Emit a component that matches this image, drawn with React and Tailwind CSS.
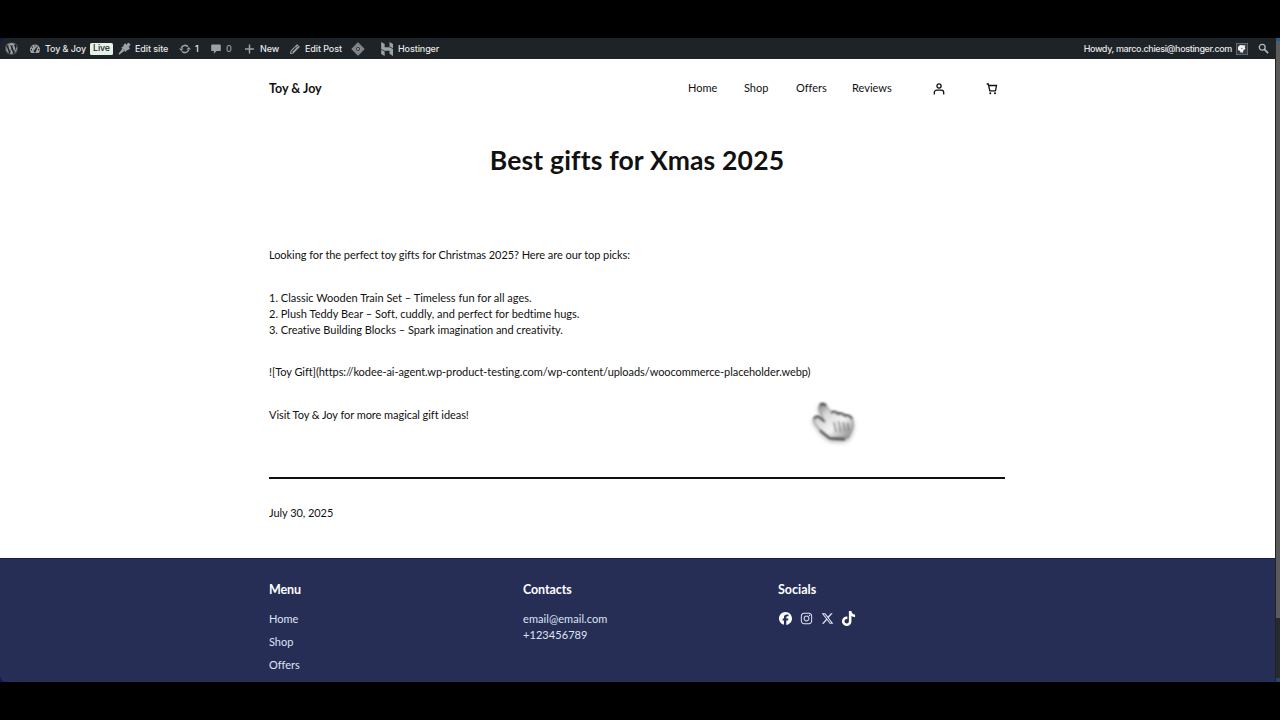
import React from 'react';
import { FaWordpress, FaFacebook, FaInstagram, FaTiktok, FaXTwitter } from 'react-icons/fa6';

const GaugeIcon = () => (
  <svg viewBox="0 0 20 20" className="w-3 h-3 shrink-0" fill="currentColor">
    <path fillRule="evenodd" d="M10 2.5A8.5 8.5 0 0 0 1.5 11c0 2.2.8 4.2 2.2 5.7h12.6A8.4 8.4 0 0 0 18.5 11 8.5 8.5 0 0 0 10 2.5ZM9 4h2v2H9V4ZM4.500 6h2v2h-2V6Zm9 0h1.3l-3 7.500a2 2 0 1 1-3.300-1.500L13.500 6ZM3 10h2v2H3v-2Zm12 0h2v2h-2v-2Z" />
  </svg>
);

const CustomizerIcon = () => (
  <svg viewBox="0 0 20 20" className="w-[13px] h-[13px] shrink-0" fill="currentColor">
    <path d="M11 2 8.500 4.500 8 7 5 8.500 12 15.500 13.500 12.500 16 12 18.500 9.500Z" />
    <path d="M12.500 4.500 16 .8 19.500 4.300 15.800 8Z" />
    <path d="M6.300 9.800 10.200 13.700 8.500 14.500 2 19.500.700 18.200 5.500 11.800Z" />
  </svg>
);

const UpdateIcon = () => (
  <svg viewBox="0 0 20 20" className="w-3 h-3 shrink-0" fill="none" stroke="currentColor" strokeWidth="2.6">
    <path d="M4 8.500A6.200 6.200 0 0 1 15 6.500M16 11.500A6.200 6.200 0 0 1 5 13.500" />
    <path d="M0 9.300h7.600L3.800 13.500ZM12.400 10.700h7.600L16.200 6.500Z" fill="currentColor" stroke="none" />
  </svg>
);

const CommentIcon = () => (
  <svg viewBox="0 0 20 20" className="w-3 h-3 shrink-0" fill="currentColor">
    <path d="M3.500 2.500h13c1 0 1.500.5 1.500 1.500v8c0 1-.5 1.500-1.500 1.500H11L6.500 18v-4.500h-3C2.500 13.500 2 13 2 12V4c0-1 .5-1.500 1.500-1.500Z" />
  </svg>
);

const PlusIcon = () => (
  <svg viewBox="0 0 12 12" className="w-3 h-3 shrink-0" stroke="currentColor" strokeWidth="1.500">
    <path d="M5.500 1.500v9M1 6h9" />
  </svg>
);

const PencilIcon = () => (
  <svg viewBox="0 0 20 20" className="w-3 h-3 shrink-0" fill="none" stroke="currentColor" strokeWidth="1.7" strokeLinejoin="round">
    <path d="M13.500 3 17 6.500 7 16.500 2.500 17.500 3.500 13ZM11.500 5 15 8.500M14.700 7 6 15.700" />
  </svg>
);

const DiamondIcon = () => (
  <svg viewBox="0 0 14 14" className="w-[14px] h-[14px] shrink-0">
    <path d="M7 .3 13.700 7 7 13.700.3 7Z" fill="#8a8d8f" />
    <path d="M7 2.300 11.700 7 7 11.700 2.300 7Z" fill="none" stroke="#686d70" strokeWidth=".7" />
    <circle cx="7" cy="7" r="1.700" fill="none" stroke="#3a4045" strokeWidth="1" />
  </svg>
);

const HostingerIcon = () => (
  <svg viewBox="0 0 24 24" className="w-[14px] h-[14px] shrink-0" fill="currentColor">
    <path d="M2 .2 8 3.400v5.400l8.300.1 6 3.200H2V.2ZM16.300 7.500V.2l6 3.200v7.400l-6-3.300ZM16.300 20.300v-5.200L8 15l-6-3.100h20.300v12l-6-3.600ZM2 13.200l6 3.100v7.500l-6-3.300v-7.300Z" />
  </svg>
);

const SearchIcon = () => (
  <svg viewBox="0 0 12 12" className="w-[11px] h-[11px] shrink-0" fill="none" stroke="currentColor">
    <circle cx="4.600" cy="4.600" r="3.200" strokeWidth="1.400" />
    <path d="m7 7 4 4" strokeWidth="1.800" />
  </svg>
);

const Avatar = () => (
  <svg viewBox="0 0 12 12" className="w-3 h-3 shrink-0">
    <path d="M0 0h12v12H0Z" fill="#343a3e" stroke="#8c8f94" />
    <path d="M2 4 4 2l5.500.5-.7 2 .7 1.500-2 1L7 9.500H4.500L4 8 2 7Z" fill="#f0f0f0" />
    <path d="M5 5.500h1.500" stroke="#888" />
  </svg>
);

const UserIcon = () => (
  <svg viewBox="0 0 12 12" className="w-3 h-3" fill="none" stroke="#111" strokeWidth="1.300">
    <circle cx="6" cy="3" r="2.100" />
    <path d="M1.300 11.500V9.600a2.400 2.400 0 0 1 2.400-2.400h4.600a2.400 2.400 0 0 1 2.400 2.400v1.900" />
  </svg>
);

const CartIcon = () => (
  <svg viewBox="0 0 12 12" className="w-3 h-3" fill="none" stroke="#111" strokeWidth="1.300">
    <path d="M.7 1h1.600l1.500 6.900h5.700l1-5.400H2.700" />
    <circle cx="4.300" cy="10.300" r="1" fill="#111" stroke="none" />
    <circle cx="9" cy="10.300" r="1" fill="#111" stroke="none" />
  </svg>
);

const HandCursor = () => (
  <svg viewBox="0 0 46 44" className="absolute left-[810px] top-[400px] w-[46px] h-[44px] drop-shadow-[0_2px_2px_rgba(0,0,0,0.35)]">
    <defs>
      <linearGradient id="hand" x1="0" y1="0" x2="1" y2="1">
        <stop offset="0" stopColor="#666" />
        <stop offset=".3" stopColor="#d8d8d8" />
        <stop offset=".6" stopColor="#f4f4f4" />
        <stop offset="1" stopColor="#777" />
      </linearGradient>
      <filter id="soft"><feGaussianBlur stdDeviation=".9" /></filter>
    </defs>
    <g filter="url(#soft)">
      <path d="M9 6c1-2 4-3 6-1l7 8c3-1 5-1 7 1 3-1 5 0 6 2 3-1 6 0 7 3 2 5 1 9-1 13l-3 6-17 1-8-6-9-11c-2-3 1-6 4-5l6 3-5-11Z" fill="url(#hand)" stroke="#999" strokeWidth="1" />
      <path d="M10 5c2-2 5-1 6 1M21 13c2-2 5-1 7 1 2-1 5 0 7 2 2-1 5 0 7 3M4 19c1-3 4-3 6-1l5 4M10 30l10 8 15 1" fill="none" stroke="#222" strokeWidth="2" />
      <path d="m24 22 2 10m2.500-11 2 11m2.500-10 2 10m2.500-9 1 8" fill="none" stroke="#777" strokeWidth="1.500" />
    </g>
  </svg>
);

const AdminBar = () => (
  <div className="flex h-[21px] w-full items-center rounded-tl-[6px] bg-[#1d2327] pl-[5px] font-['Inter','Liberation_Sans',sans-serif] text-[9px] font-medium leading-none tracking-[-0.1px] text-[#e6e7e8] whitespace-nowrap">
    <div className="w-[24px] text-[#9ca1a6]"><FaWordpress size={13} /></div>
    <div className="flex w-[61px] items-center gap-1 text-[#9ca1a6]">
      <GaugeIcon /><span className="text-[#e6e7e8]">Toy &amp; Joy</span>
    </div>
    <div className="flex h-3 w-[23px] items-center justify-center rounded-[1.5px] bg-[#e6f2e8] text-[8.800px] text-[#1d2327]">Live</div>
    <div className="ml-[5px] flex w-[61px] items-center gap-1 text-[#9ca1a6]">
      <CustomizerIcon /><span className="text-[#e6e7e8]">Edit site</span>
    </div>
    <div className="flex w-[31px] items-center gap-1 text-[#9ca1a6]">
      <UpdateIcon /><span className="text-[#e6e7e8]">1</span>
    </div>
    <div className="flex w-[34px] items-center gap-1 text-[#9ca1a6]">
      <CommentIcon /><span>0</span>
    </div>
    <div className="flex w-[45px] items-center gap-1 text-[#9ca1a6]">
      <PlusIcon /><span className="text-[#e6e7e8]">New</span>
    </div>
    <div className="flex w-[62px] items-center gap-1 text-[#9ca1a6]">
      <PencilIcon /><span className="text-[#e6e7e8]">Edit Post</span>
    </div>
    <div className="w-[29px]"><DiamondIcon /></div>
    <div className="flex items-center gap-1 text-[#9ca1a6]">
      <HostingerIcon /><span className="text-[#e6e7e8]">Hostinger</span>
    </div>
    <div className="ml-auto flex items-center gap-1 pr-[6px]">
      <span className="tracking-[-0.36px]">Howdy, marco.chiesi@hostinger.com</span>
      <Avatar />
      <span className="ml-[6px] text-[#b5b9bc]"><SearchIcon /></span>
    </div>
  </div>
);

const Header = () => (
  <header className="flex h-[59px] w-[736px] items-center whitespace-nowrap">
    <div className="w-[419px] pt-0.5 text-[12.5px] font-bold">Toy &amp; Joy</div>
    <nav className="flex flex-1 text-[11px]">
      <a className="w-[56px]">Home</a>
      <a className="w-[52px]">Shop</a>
      <a className="w-[56px]">Offers</a>
      <a className="w-[60px]">Reviews</a>
    </nav>
    <div className="flex w-[72px] justify-between pr-[7px]">
      <UserIcon />
      <CartIcon />
    </div>
  </header>
);

const Article = () => (
  <main className="w-[736px] text-[11px] leading-4 tracking-[-0.06px] whitespace-nowrap">
    <h1 className="mt-[24px] text-center text-[26.5px] font-bold leading-9 tracking-[0.17px]">Best gifts for Xmas 2025</h1>
    <p className="mt-[69px]">Looking for the perfect toy gifts for Christmas 2025? Here are our top picks:</p>
    <p className="mt-[26.5px] tracking-normal">
      1. Classic Wooden Train Set – Timeless fun for all ages.<br />
      2. Plush Teddy Bear – Soft, cuddly, and perfect for bedtime hugs.<br />
      <span className="tracking-[-0.04px]">3. Creative Building Blocks – Spark imagination and creativity.</span>
    </p>
    <p className="mt-[26.5px]">![Toy Gift](https://kodee-ai-agent.wp-product-testing.com/wp-content/uploads/woocommerce-placeholder.webp)</p>
    <p className="mt-[27px]">Visit Toy &amp; Joy for more magical gift ideas!</p>
    <hr className="mt-[54px] border-t-2 border-[#111]" />
    <p className="mt-[26px]">July 30, 2025</p>
  </main>
);

const Footer = () => (
  <footer className="flex h-[124px] items-start rounded-bl-[6px] border-t border-[#171d45] bg-[#262e55] pl-[269px] pt-[23px] text-[11px] leading-4 text-[#dfe3f5]">
    <div className="w-[254px]">
      <h2 className="text-[12.5px] font-bold tracking-[-0.1px] text-white">Menu</h2>
      <ul className="mt-[13px] flex flex-col gap-[7px]">
        <li>Home</li>
        <li>Shop</li>
        <li>Offers</li>
      </ul>
    </div>
    <div className="w-[255px]">
      <h2 className="text-[12.5px] font-bold tracking-[-0.1px] text-white">Contacts</h2>
      <p className="mt-[13px] tracking-[0.07px]">email@email.com<br />+123456789</p>
    </div>
    <div>
      <h2 className="text-[12.5px] font-bold text-white">Socials</h2>
      <div className="mt-[12px] flex h-4 items-center gap-2 pl-[1px]">
        <FaFacebook size={13} color="#fff" />
        <FaInstagram size={13} />
        <FaXTwitter size={13} />
        <FaTiktok size={15} color="#fff" className="-ml-px" />
      </div>
    </div>
  </footer>
);

export default function App() {
  return (
    <div className="relative h-[720px] w-[1280px] overflow-hidden bg-black py-[38px] font-['Lato','Noto_Sans',sans-serif] text-[#111] [font-variant-ligatures:none]">
      <div className="flex h-[644px] bg-[#111459]">
        <div className="flex w-[1275px] flex-col overflow-hidden">
          <AdminBar />
          <div className="h-[499px] bg-white pl-[269px]">
            <Header />
            <Article />
          </div>
          <Footer />
        </div>
        <div className="flex w-[5px] flex-col border-l border-[#222] bg-[#252a2c]">
          <div className="h-[3px] bg-[#1c5a92]" />
          <div className="h-[577px] bg-[#5b5b5b]" />
          <div className="flex-1" />
          <div className="h-[4px] bg-[#244766]" />
        </div>
      </div>
      <HandCursor />
    </div>
  );
}
